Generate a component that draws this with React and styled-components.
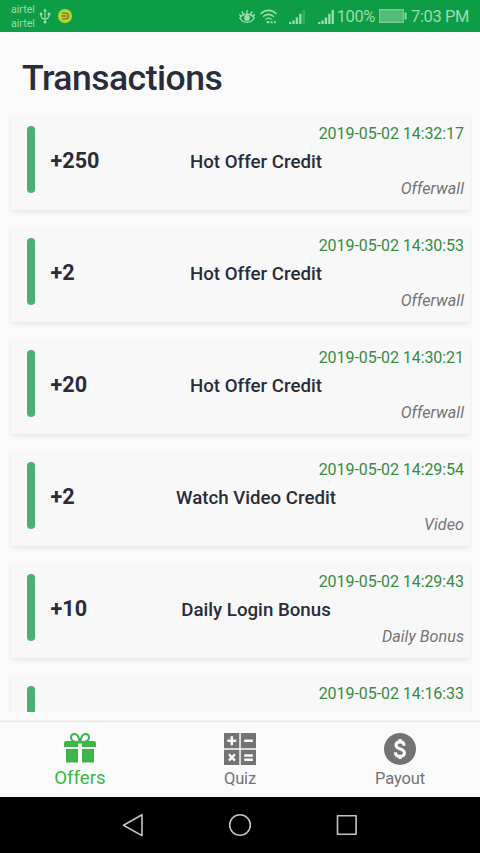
import React from "react";
import styled, { createGlobalStyle } from "styled-components";

const GlobalStyle = createGlobalStyle`
  * { box-sizing: border-box; }
  body { margin: 0; background: #fafafa; font-family: Roboto, sans-serif; }
`;

const Screen = styled.div`
  display: flex;
  flex-direction: column;
  width: 480px;
  height: 853px;
  overflow: hidden;
  background: #fafafa;
  color: #292c39;
`;

const StatusBar = styled.header`
  display: flex;
  align-items: center;
  flex: 0 0 32px;
  padding: 0 11px;
  background: #0d9d47;
  color: #9cdcaf;
`;

const Carriers = styled.div`
  display: flex;
  flex-direction: column;
  width: 28px;
  padding-top: 2px;
  font-size: 10.6px;
  line-height: 14.5px;
`;

const StatusIcon = styled.svg`
  display: block;
  flex: none;
  width: ${(p) => p.$w}px;
  height: ${(p) => p.$h}px;
  margin-left: ${(p) => p.$gap || 0}px;
`;

const StatusRight = styled.div`
  display: flex;
  align-items: center;
  margin-left: auto;
`;

const StatusText = styled.span`
  margin-left: ${(p) => p.$gap}px;
  font-size: 16.5px;
  line-height: 30px;
  letter-spacing: ${(p) => p.$spacing || 0}px;
  white-space: nowrap;
  padding-top: 1px;
`;

const Title = styled.h1`
  flex: 0 0 84px;
  margin: 0;
  padding: 8px 22px 0;
  font-size: 35.5px;
  font-weight: 500;
  line-height: 76px;
  letter-spacing: -0.5px;
`;

const List = styled.main`
  display: flex;
  flex-direction: column;
  gap: 18px;
  flex: 0 0 596px;
  height: 596px;
  padding: 0 10px 0 11px;
  overflow: hidden;
`;

const Card = styled.article`
  display: flex;
  flex: 0 0 94px;
  gap: 13px;
  padding: 0 6px 0 16px;
  border-radius: 4px;
  background: #f8f8f8;
  box-shadow: 0 2px 4px rgba(0, 0, 0, 0.08), 0 0 2px rgba(0, 0, 0, 0.02);
`;

const Marker = styled.div`
  flex: 0 0 8px;
  height: 67px;
  margin-top: 10px;
  border-radius: 4px;
  background: #4bb075;
`;

const Details = styled.div`
  display: grid;
  flex: 1;
  grid-template-rows: 34px 24px 28px;
  align-items: center;
`;

const DateText = styled.time`
  grid-area: 1 / 1;
  justify-self: end;
  color: #388a3f;
  font-size: 16px;
  letter-spacing: -0.06px;
`;

const Amount = styled.strong`
  grid-area: 2 / 1;
  justify-self: start;
  padding: 0 0 3px 2.5px;
  font-size: 21.6px;
  font-weight: 700;
`;

const Name = styled.span`
  grid-area: 2 / 1;
  justify-self: center;
  font-size: 18.7px;
  font-weight: 500;
`;

const Source = styled.em`
  grid-area: 3 / 1;
  justify-self: end;
  color: #757575;
  font-size: 16.2px;
`;

const TabBar = styled.nav`
  display: grid;
  grid-template-columns: repeat(3, 1fr);
  flex: 0 0 75px;
  margin-top: 10px;
  background: #fafafa;
  box-shadow: 0 -1px 2px rgba(0, 0, 0, 0.1);
`;

const Tab = styled.div`
  display: flex;
  flex-direction: column;
  align-items: center;
  padding-top: 11px;
  color: ${(p) => (p.$active ? "#3db54a" : "#737373")};
  font-size: ${(p) => (p.$active ? 18.6 : 16.5)}px;
  line-height: 24px;
  letter-spacing: ${(p) => (p.$active ? 0.02 : -0.1)}px;
`;

const TabIcon = styled.svg`
  display: block;
  width: 32px;
  height: 32px;
  margin-bottom: ${(p) => (p.$active ? 1 : 2)}px;
`;

const SystemNav = styled.footer`
  display: flex;
  align-items: center;
  justify-content: center;
  gap: 83px;
  flex: 0 0 56px;
  background: #000;
`;

const NavIcon = styled.svg`
  display: block;
  width: 24px;
  height: 24px;
  fill: none;
  stroke: #c4c4c4;
  stroke-width: 1.6;
  stroke-linejoin: round;
`;

const transactions = [
  { amount: "+250", name: "Hot Offer Credit", date: "2019-05-02 14:32:17", source: "Offerwall" },
  { amount: "+2", name: "Hot Offer Credit", date: "2019-05-02 14:30:53", source: "Offerwall" },
  { amount: "+20", name: "Hot Offer Credit", date: "2019-05-02 14:30:21", source: "Offerwall" },
  { amount: "+2", name: "Watch Video Credit", date: "2019-05-02 14:29:54", source: "Video" },
  { amount: "+10", name: "Daily Login Bonus", date: "2019-05-02 14:29:43", source: "Daily Bonus" },
  { date: "2019-05-02 14:16:33" },
];

function Transaction({ amount, name, date, source }) {
  return (
    <Card>
      <Marker />
      <Details>
        <DateText>{date}</DateText>
        {amount && <Amount>{amount}</Amount>}
        {name && <Name>{name}</Name>}
        {source && <Source>{source}</Source>}
      </Details>
    </Card>
  );
}

function UsbIcon() {
  return (
    <StatusIcon $w={12} $h={16} $gap={0} viewBox="0 0 12 16" fill="none" stroke="currentColor" strokeWidth="1.1">
      <path d="M6 3v10M6 11.3C3 10.6 2 10 2 7M6 11.3c3-.7 4-1.3 4-4.3" />
      <path d="M6 .3 7.9 3.4H4.1Z" fill="currentColor" stroke="none" />
      <circle cx="6" cy="14" r="1.5" fill="currentColor" stroke="none" />
      <circle cx="2" cy="6" r="1.4" fill="currentColor" stroke="none" />
      <path d="M8.7 4.7h2.6v2.6H8.7z" fill="currentColor" stroke="none" />
    </StatusIcon>
  );
}

function CoinIcon() {
  return (
    <StatusIcon $w={14} $h={14} $gap={7} viewBox="0 0 14 14" fill="none">
      <circle cx="7" cy="7" r="7" fill="#b9d52f" />
      <path d="M4 4.2h3.6a2.8 2.8 0 0 1 0 5.6H4M3.3 7h5" stroke="#80701c" strokeWidth="1.3" />
    </StatusIcon>
  );
}

function EyeIcon() {
  return (
    <StatusIcon $w={16} $h={15} viewBox="0 0 16 15" fill="none" stroke="currentColor" strokeWidth="1.4">
      <path d="M.8 9C3.8 3.9 12.2 3.9 15.2 9 12.2 14.7 3.8 14.7.8 9ZM8 4.8V1M4.5 5.3 2.9 2.4M11.5 5.3l1.6-2.9M1.9 7.2.3 5.2M14.1 7.2l1.6-2" />
      <circle cx="8" cy="8.9" r="2.9" fill="currentColor" stroke="none" />
    </StatusIcon>
  );
}

function WifiIcon() {
  return (
    <StatusIcon $w={17} $h={15} $gap={5} viewBox="0 0 17 15" fill="none" stroke="currentColor" strokeWidth="1.6">
      <path d="M.6 5c4.4-4.8 11.4-4.8 15.8 0M3 7.8c3.1-3.3 7.9-3.3 11 0M5.5 10.5c1.7-1.7 4.3-1.7 6 0" />
      <path d="M6.8 12h2.4v2.2H6.8zM10.5 12.3h2v2h-2zM13.8 12.3h2v2h-2z" fill="currentColor" stroke="none" />
    </StatusIcon>
  );
}

function SignalIcon({ gap, weak }) {
  return (
    <StatusIcon $w={16} $h={15} $gap={gap} viewBox="0 0 16 15" fill="currentColor">
      <path d="M0 13h2.3v2H0zM3.4 11.4h2.3V15H3.4zM6.8 8.4h2.3V15H6.8zM10.2 4.8h2.3V15h-2.3z" />
      <path d="M13.6 1h2.3v14h-2.3z" opacity={weak ? 0.3 : 1} />
    </StatusIcon>
  );
}

function BatteryIcon() {
  return (
    <StatusIcon $w={28} $h={14} $gap={4} viewBox="0 0 28 14">
      <path d="M.6.6h23.8v12.8H.6z" fill="#55bb78" stroke="#7bcb95" strokeWidth="1.1" />
      <path d="M25.6 3.5h1.9v7h-1.9z" fill="currentColor" />
    </StatusIcon>
  );
}

function GiftIcon() {
  return (
    <TabIcon $active viewBox="0 0 32 32" fill="currentColor">
      <path d="M2 8h28a2 2 0 0 1 2 2v4H0v-4a2 2 0 0 1 2-2ZM2 16h12v13.5H2zM18 16h12v13.5H18z" />
      <path d="M15 9C10.4 9.6 7 7.6 7 4.8 7 2.8 8.3 1 10.5 1 13.4 1 15 4.2 15.6 9M17 9c4.6.6 8-1.4 8-4.2C25 2.8 23.7 1 21.5 1 18.6 1 17 4.2 16.4 9" fill="none" stroke="currentColor" strokeWidth="2" />
      <path d="M14 10.5h4v3.5h-4z" fill="#fafafa" opacity=".85" />
    </TabIcon>
  );
}

function QuizIcon() {
  return (
    <TabIcon viewBox="0 0 32 32" fill="none" stroke="#fafafa" strokeWidth="2.4">
      <path d="M0 0h15.3v15.3H0zM16.8 0H32v15.3H16.8zM0 16.8h15.3V32H0zM16.8 16.8H32V32H16.8z" fill="currentColor" stroke="none" />
      <path d="M3.3 7.8h9M7.8 3.3v9M20.2 7.8h8.6M4.9 21.2l6 6.4M10.9 21.2l-6 6.4M20.2 22.5h8.6M20.2 26.7h8.6" />
    </TabIcon>
  );
}

function PayoutIcon() {
  return (
    <TabIcon viewBox="0 0 32 32" fill="none">
      <circle cx="16" cy="16" r="16" fill="currentColor" />
      <path d="M20.1 12.8c-.1-2.4-1.6-3.9-4-3.9s-4.1 1.3-4.1 3.3c0 4.5 8.4 2.9 8.4 7.6 0 2.2-1.7 3.6-4.3 3.6-2.8 0-4.6-1.6-4.6-4.2M16.1 6v3M16.1 23v3" stroke="#fafafa" strokeWidth="3.1" />
    </TabIcon>
  );
}

export default function App() {
  return (
    <>
      <GlobalStyle />
      <Screen>
        <StatusBar>
          <Carriers>
            <span>airtel</span>
            <span>airtel</span>
          </Carriers>
          <UsbIcon />
          <CoinIcon />
          <StatusRight>
            <EyeIcon />
            <WifiIcon />
            <SignalIcon gap={12} weak />
            <SignalIcon gap={13} />
            <StatusText $gap={2.5} $spacing={-0.4}>100%</StatusText>
            <BatteryIcon />
            <StatusText $gap={4} $spacing={-0.4}>7:03 PM</StatusText>
          </StatusRight>
        </StatusBar>
        <Title>Transactions</Title>
        <List>
          {transactions.map((item) => (
            <Transaction key={item.date} {...item} />
          ))}
        </List>
        <TabBar>
          <Tab $active>
            <GiftIcon />
            Offers
          </Tab>
          <Tab>
            <QuizIcon />
            Quiz
          </Tab>
          <Tab>
            <PayoutIcon />
            Payout
          </Tab>
        </TabBar>
        <SystemNav>
          <NavIcon viewBox="0 0 24 24">
            <path d="M21 1.8v20.8L2.5 12.2Z" />
          </NavIcon>
          <NavIcon viewBox="0 0 24 24">
            <circle cx="12" cy="12" r="10.3" />
          </NavIcon>
          <NavIcon viewBox="0 0 24 24">
            <path d="M2.5 2.8h18.6v18.4H2.5z" />
          </NavIcon>
        </SystemNav>
      </Screen>
    </>
  );
}
